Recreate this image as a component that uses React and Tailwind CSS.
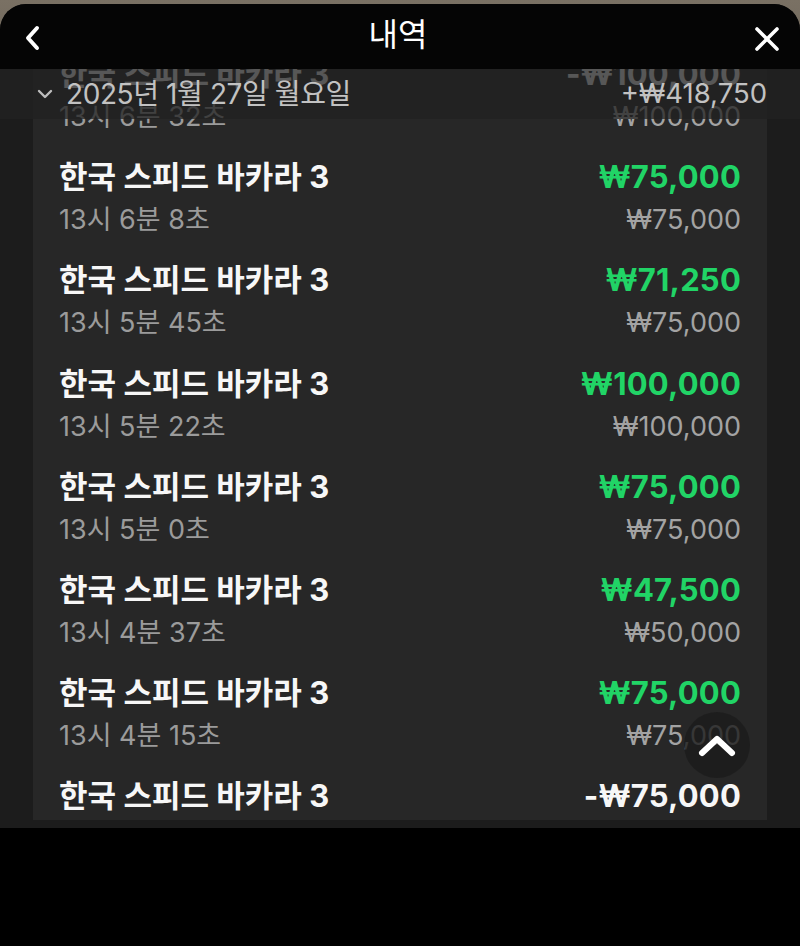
import React from 'react';

const rows = [
    { time: '13시 6분 32초', win: '-₩100,000', bet: '₩100,000', won: false },
    { time: '13시 6분 8초', win: '₩75,000', bet: '₩75,000', won: true },
    { time: '13시 5분 45초', win: '₩71,250', bet: '₩75,000', won: true },
    { time: '13시 5분 22초', win: '₩100,000', bet: '₩100,000', won: true },
    { time: '13시 5분 0초', win: '₩75,000', bet: '₩75,000', won: true },
    { time: '13시 4분 37초', win: '₩47,500', bet: '₩50,000', won: true },
    { time: '13시 4분 15초', win: '₩75,000', bet: '₩75,000', won: true },
    { time: '13시 3분 52초', win: '-₩75,000', bet: '₩75,000', won: false },
];

const font = { fontFamily: 'Inter, "Noto Sans CJK KR", sans-serif' };

const Row = ({ time, win, bet, won }) => (
    <div className="h-[103.2px] pt-[12px] flex justify-between">
        <div className="flex flex-col">
            <div className="h-[36px] leading-[36px] text-[31px] font-bold text-[#f7f7f7]">
                한국 스피드 바카라 3
            </div>
            <div className="mt-[9px] h-[32px] leading-[32px] text-[27px] text-[#9b9b9b]">
                {time}
            </div>
        </div>
        <div className="flex flex-col items-end">
            <div className={`h-[36px] leading-[36px] text-[31px] font-bold tracking-[0.2px] ${won ? 'text-[#21d466]' : 'text-[#f7f7f7]'}`}>
                {win}
            </div>
            <div className="mt-[9px] h-[32px] leading-[32px] text-[27px] text-[#a3a3a3]">
                {bet}
            </div>
        </div>
    </div>
);

export default function App() {
    return (
        <div className="w-[800px] h-[946px] bg-black overflow-hidden" style={font}>
            {/* game backdrop peeking above the sheet */}
            <div className="h-[828px] bg-gradient-to-b from-[#7a7164] via-[#3a352f] to-[#3a352f] flex flex-col">
                <div className="mt-[4px] flex-1 rounded-t-[26px] bg-[#1c1c1c] flex flex-col overflow-hidden">
                    {/* Header */}
                    <div className="h-[65px] shrink-0 bg-[#050505] flex items-center justify-between pl-[22px] pr-[18px]">
                        <svg width="22" height="26" viewBox="0 0 22 26" className="mt-[2px]">
                            <path d="M15 3 L6 13 L15 23" fill="none" stroke="#fff" strokeWidth="4" strokeLinecap="round" strokeLinejoin="round" />
                        </svg>
                        <div className="text-[32px] text-white leading-none -mt-[4px]">내역</div>
                        <svg width="30" height="30" viewBox="0 0 30 30" className="mt-[4px]">
                            <path d="M5 5 L25 25 M25 5 L5 25" fill="none" stroke="#fff" strokeWidth="3.6" strokeLinecap="round" />
                        </svg>
                    </div>

                    {/* Scroll area */}
                    <div className="relative flex-1 flex flex-col pb-[8px] overflow-hidden">
                        {/* sticky date header */}
                        <div className="absolute inset-x-0 top-0 h-[50px] z-10 bg-[#212121]/75 flex items-center justify-between pl-[37px] pr-[33px]">
                            <div className="flex items-center gap-[13px]">
                                <svg width="16" height="12" viewBox="0 0 16 12">
                                    <path d="M2 3 L8 9 L14 3" fill="none" stroke="#bdbdbd" strokeWidth="2.4" strokeLinecap="round" strokeLinejoin="round" />
                                </svg>
                                <span className="text-[28px] text-[#c2c2c2] tracking-[-0.4px]">2025년 1월 27일 월요일</span>
                            </div>
                            <span className="text-[27.5px] text-[#c2c2c2]">+₩418,750</span>
                        </div>

                        <div className="mx-[33px] flex-1 bg-[#272727] overflow-hidden px-[26px]">
                            <div className="-mt-[25px]">
                                {rows.map((r, i) => (
                                    <Row key={i} {...r} />
                                ))}
                            </div>
                        </div>

                        {/* scroll to top */}
                        <button className="absolute right-[50px] bottom-[50px] z-10 w-[66px] h-[66px] rounded-full bg-[#1c1c1c]/80 flex items-center justify-center">
                            <svg width="40" height="28" viewBox="0 0 40 28">
                                <path d="M5 22 L20 8 L35 22" fill="none" stroke="#fff" strokeWidth="6" strokeLinecap="round" strokeLinejoin="round" />
                            </svg>
                        </button>
                    </div>
                </div>
            </div>
        </div>
    );
}
